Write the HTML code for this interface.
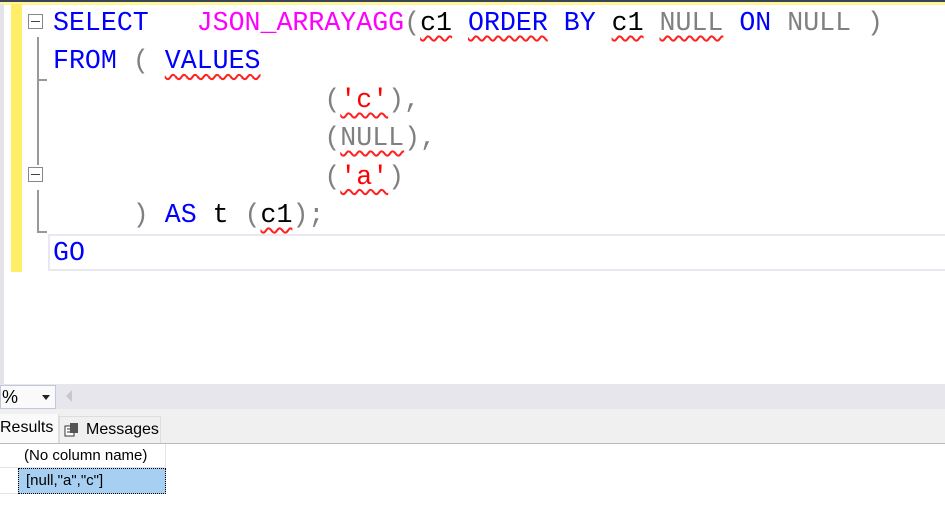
<!DOCTYPE html>
<html><head><style>
body{margin:0;width:945px;height:525px;overflow:hidden;background:#fff;position:relative;font-family:"Liberation Sans",sans-serif}
.abs{position:absolute}
.code{position:absolute;left:53px;top:4px;font-family:"Liberation Mono",monospace;font-size:26.6px;line-height:38.4px;white-space:pre;color:#000}
.b{color:#0000ff}.m{color:#ff00ff}.g{color:#808080}.r{color:#ff0000}
.w{text-decoration:underline wavy #ff2020;text-decoration-thickness:1.5px;text-underline-offset:5px}
.box{position:absolute;left:28px;width:15px;height:15px;border:1.5px solid #888;box-sizing:border-box;background:#fff}
.box:after{content:"";position:absolute;left:2px;right:2px;top:5.5px;height:1.5px;background:#444}
</style></head><body>
<div class="abs" style="left:0;top:0;width:945px;height:1.5px;background:#3a4656"></div>
<div class="abs" style="left:0;top:1.5px;width:945px;height:3px;background:#fff59a"></div>
<div class="abs" style="left:0;top:4px;width:4px;height:380px;background:#e4e4e8"></div>
<div class="abs" style="left:11px;top:4px;width:11px;height:268px;background:#ffee66"></div>
<div class="abs" style="left:48px;top:234px;width:897px;height:37px;border:2.5px solid #e8e8f0;border-right:none;box-sizing:border-box"></div>
<div class="box" style="top:14px"></div>
<div class="abs" style="left:37px;top:37px;width:2px;height:42px;background:#999"></div>
<div class="abs" style="left:37px;top:79px;width:10px;height:2px;background:#999"></div>
<div class="abs" style="left:37px;top:81px;width:2px;height:84px;background:#999"></div>
<div class="box" style="top:167px"></div>
<div class="abs" style="left:37px;top:190px;width:2px;height:43px;background:#999"></div>
<div class="abs" style="left:37px;top:231px;width:10px;height:2px;background:#999"></div>
<div class="code"><span class="b">SELECT</span>   <span class="m">JSON_ARRAYAGG</span><span class="g">(</span><span class="w">c1</span> <span class="b w">ORDER</span> <span class="b">BY</span> <span class="w">c1</span> <span class="g w">NULL</span> <span class="b">ON</span> <span class="g">NULL )</span>
<span class="b">FROM</span> <span class="g">(</span> <span class="b w">VALUES</span>
                 <span class="g">(</span><span class="r w">'c'</span><span class="g">),</span>
                 <span class="g">(</span><span class="g w">NULL</span><span class="g">),</span>
                 <span class="g">(</span><span class="r w">'a'</span><span class="g">)</span>
     <span class="g">)</span> <span class="b">AS</span> t <span class="g">(</span><span class="w">c1</span><span class="g">);</span>
<span class="b">GO</span></div>
<div class="abs" style="left:0;top:384px;width:945px;height:25px;background:#e6e6ec"></div>
<div class="abs" style="left:0;top:385px;width:56px;height:24px;background:#fafafa;border:1px solid #c0c8dc;box-sizing:border-box;font-size:18px;line-height:22px;padding-left:1px">%</div>
<div class="abs" style="left:42px;top:395px;width:0;height:0;border-left:4px solid transparent;border-right:4px solid transparent;border-top:5px solid #222"></div>
<div class="abs" style="left:66px;top:390px;width:0;height:0;border-top:6px solid transparent;border-bottom:6px solid transparent;border-right:6px solid #c8c8cc"></div>
<div class="abs" style="left:0;top:409px;width:945px;height:34px;background:#f0f0f0"></div>
<div class="abs" style="left:0;top:414px;width:58px;height:29px;background:#fafafa;border-right:1px solid #ddd;font-size:16px;line-height:28px">Results</div>
<div class="abs" style="left:59px;top:416px;width:102px;height:27px;border:1px solid #ddd;border-bottom:none;box-sizing:border-box;font-size:16px;line-height:26px;padding-left:26px">Messages</div>
<svg class="abs" style="left:64px;top:421px" width="16" height="16"><rect x="1" y="5" width="9" height="10" fill="#fff" stroke="#333"/><line x1="3" y1="8" x2="8" y2="8" stroke="#333"/><line x1="3" y1="11" x2="8" y2="11" stroke="#333"/><rect x="6" y="2" width="8" height="10" fill="#555"/></svg>
<div class="abs" style="left:0;top:443px;width:945px;height:1px;background:#bbb"></div>
<div class="abs" style="left:18px;top:444px;width:148px;height:24px;border-right:1px solid #e4e4e4;border-bottom:1px solid #e4e4e4;font-size:15px;line-height:24px;padding-left:6px;box-sizing:border-box">(No column name)</div>
<div class="abs" style="left:0;top:467px;width:18px;height:1px;background:#e4e4e4"></div>
<div class="abs" style="left:0;top:493px;width:18px;height:1px;background:#e4e4e4"></div>
<div class="abs" style="left:18px;top:468px;width:148px;height:26px;background:#a7cff1;border:1px dotted #000;box-sizing:border-box;font-size:15px;line-height:24px;padding-left:7px">[null,"a","c"]</div>
</body></html>
